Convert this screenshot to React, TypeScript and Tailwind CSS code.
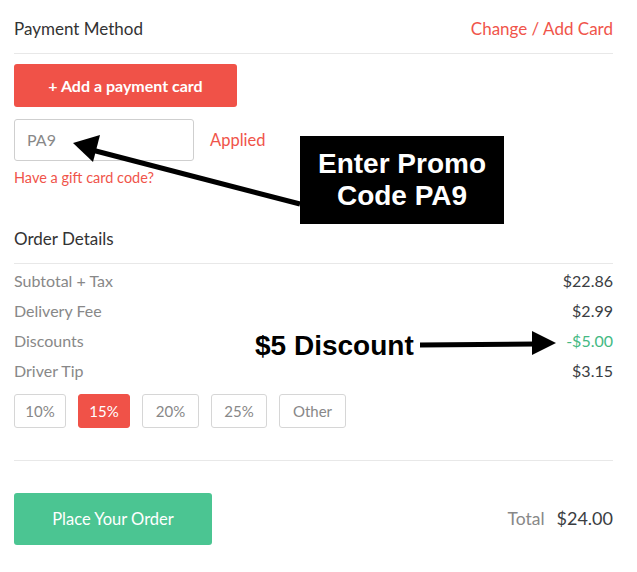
const tips = [
  { label: "10%", w: "w-[52px]" },
  { label: "15%", w: "w-[52px]" },
  { label: "20%", w: "w-[57px]" },
  { label: "25%", w: "w-[56px]" },
  { label: "Other", w: "w-[67px]" },
];

const rows = [
  { label: "Subtotal + Tax", value: "$22.86" },
  { label: "Delivery Fee", value: "$2.99" },
  { label: "Discounts", value: "-$5.00", green: true },
  { label: "Driver Tip", value: "$3.15" },
];

export default function App() {
  return (
    <div className="relative h-[572px] w-[637px] overflow-hidden bg-white pl-[14px] pr-[24px] pt-[19px] font-['Lato',sans-serif] text-[#333]">
      {/* Payment method */}
      <div className="flex items-center justify-between text-[17px] leading-[20px]">
        <span>Payment Method</span>
        <span className="text-[#f0544a]">Change / Add Card</span>
      </div>
      <div className="mt-[14px] h-px bg-[#e8e8e8]" />
      <button className="mt-[10px] flex h-[43px] w-[223px] items-center justify-center rounded-[3px] bg-[#f05248] text-[16px] font-bold text-white">
        + Add a payment card
      </button>
      <div className="mt-[12px] flex items-center gap-4">
        <div className="flex h-[42px] w-[180px] items-center rounded-[3px] border border-[#cfcfcf] px-3 text-[16px] text-[#888]">
          PA9
        </div>
        <span className="text-[16.5px] text-[#f0544a]">Applied</span>
      </div>
      <div className="mt-[9px] text-[14.5px] leading-[16px] text-[#f0544a]">Have a gift card code?</div>

      {/* Order details */}
      <div className="mt-[43px] text-[17px] leading-[20px]">Order Details</div>
      <div className="mt-[14px] h-px bg-[#e8e8e8]" />
      <div className="mt-[2px] flex flex-col">
        {rows.map((r) => (
          <div key={r.label} className="flex h-[30px] items-center justify-between text-[16px]">
            <span className="text-[#888]">{r.label}</span>
            <span className={r.green ? "text-[#44b983]" : "text-[#3a3d42]"}>{r.value}</span>
          </div>
        ))}
      </div>
      <div className="mt-[8px] flex gap-3">
        {tips.map((t) => (
          <div
            key={t.label}
            className={
              t.label === "15%"
                ? `flex h-[34px] ${t.w} items-center justify-center rounded-[3px] border border-[#f05248] bg-[#f05248] text-[15px] text-white`
                : `flex h-[34px] ${t.w} items-center justify-center rounded-[3px] border border-[#d6d6d6] text-[15px] text-[#888]`
            }
          >
            {t.label}
          </div>
        ))}
      </div>
      <div className="mt-[32px] h-px bg-[#e8e8e8]" />

      {/* Footer */}
      <div className="mt-[32px] flex items-center justify-between">
        <button className="flex h-[52px] w-[198px] items-center justify-center rounded-[3px] bg-[#4bc592] text-[16.5px] text-white">
          Place Your Order
        </button>
        <div className="flex items-baseline gap-[12px]">
          <span className="text-[17.5px] text-[#888]">Total</span>
          <span className="text-[18px] text-[#3a3d42]">$24.00</span>
        </div>
      </div>

      {/* Annotations */}
      <svg className="pointer-events-none absolute left-0 top-0" width="637" height="572">
        <line x1="300" y1="204" x2="92" y2="150" stroke="#000" strokeWidth="5" />
        <polygon points="73,143 100,135 93,162" fill="#000" />
        <line x1="420" y1="345" x2="535" y2="344" stroke="#000" strokeWidth="5" />
        <polygon points="532,331 556,343 532,355" fill="#000" />
      </svg>
      <div className="absolute left-[300px] top-[136px] flex h-[88px] w-[204px] flex-col items-center justify-center bg-black font-['Liberation_Sans',Arial,sans-serif] text-[28px] font-bold leading-[32px] text-white">
        <span>Enter Promo</span>
        <span>Code PA9</span>
      </div>
      <div className="absolute left-[255px] top-[330px] font-['Liberation_Sans',Arial,sans-serif] text-[28px] font-bold leading-[32px] text-black">
        $5 Discount
      </div>
    </div>
  );
}
